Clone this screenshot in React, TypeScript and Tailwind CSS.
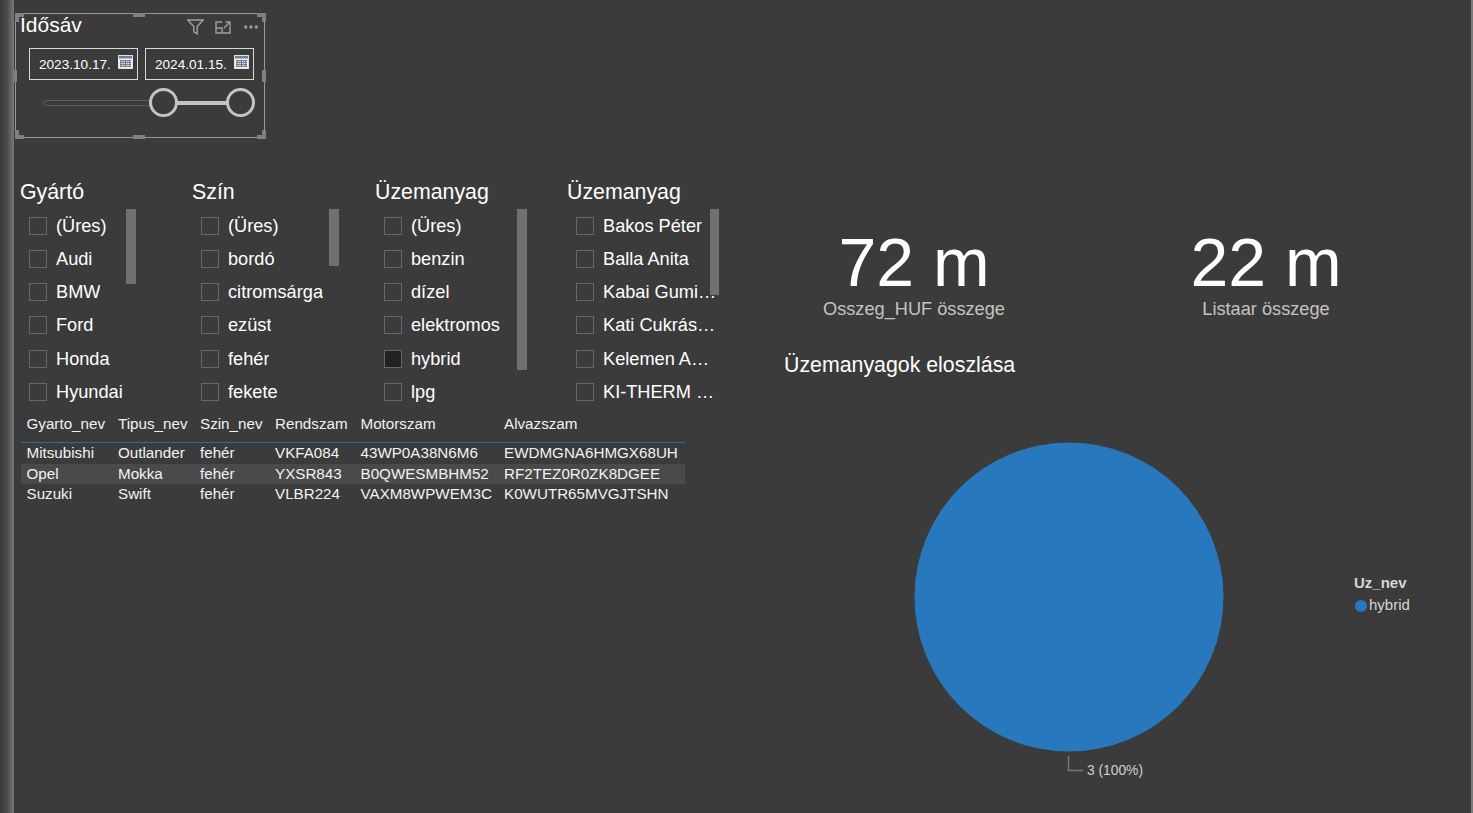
import { MoreHorizontal } from "lucide-react";

const slicers = [
  {
    title: "Gyártó",
    width: "w-[172px]",
    thumb: "h-[75px]",
    list: "w-[97px]",
    items: ["(Üres)", "Audi", "BMW", "Ford", "Honda", "Hyundai"],
  },
  {
    title: "Szín",
    width: "w-[183px]",
    thumb: "h-[57px]",
    list: "w-[128px]",
    items: ["(Üres)", "bordó", "citromsárga", "ezüst", "fehér", "fekete"],
  },
  {
    title: "Üzemanyag",
    width: "w-[192px]",
    thumb: "h-[161px]",
    list: "w-[133px]",
    items: ["(Üres)", "benzin", "dízel", "elektromos", "hybrid", "lpg"],
  },
  {
    title: "Üzemanyag",
    width: "w-[156px]",
    thumb: "h-[86px]",
    list: "w-[133.5px]",
    items: [
      "Bakos Péter",
      "Balla Anita",
      "Kabai Gumiszerviz",
      "Kati Cukrászda Kft",
      "Kelemen Autószerviz",
      "KI-THERM Szerelő Kft",
    ],
  },
];

const rows = [
  ["Mitsubishi", "Outlander", "fehér", "VKFA084", "43WP0A38N6M6", "EWDMGNA6HMGX68UH"],
  ["Opel", "Mokka", "fehér", "YXSR843", "B0QWESMBHM52", "RF2TEZ0R0ZK8DGEE"],
  ["Suzuki", "Swift", "fehér", "VLBR224", "VAXM8WPWEM3C", "K0WUTR65MVGJTSHN"],
];

const columns = ["Gyarto_nev", "Tipus_nev", "Szin_nev", "Rendszam", "Motorszam", "Alvazszam"];
const grid = "grid grid-cols-[91.5px_82px_75px_85.5px_143.5px_1fr] pl-[5.5px]";

function CalendarIcon() {
  return (
    <svg width="15" height="14" viewBox="0 0 15 14" className="shrink-0">
      <rect x="0.5" y="0.5" width="14" height="13" fill="#f4f4f4" stroke="#e2e2e2" />
      <rect x="1" y="1" width="13" height="2.5" fill="#6f7f96" />
      <path d="M2 5.5h11M2 7.5h11M2 9.5h11M2 11.5h11" stroke="#5b7fb0" strokeWidth="1" />
      <path d="M3 5v7M7.4 5v7M11.8 5v7" stroke="#4a6a9a" strokeWidth="1" />
      <path d="M5.2 5v7M9.6 5v7" stroke="#b98a5a" strokeWidth="1" />
    </svg>
  );
}

function DateBox({ value }: { value: string }) {
  return (
    <div className="w-[109px] h-[32px] border border-[#d8d8d8] flex pl-[9px] pr-[4px] pt-[6px] gap-[7px] text-[13.6px] leading-[19px] text-white">
      <span>{value}</span>
      <CalendarIcon />
    </div>
  );
}

function Handle({ className }: { className: string }) {
  return <div className={`absolute bg-[#808080] ${className}`} />;
}

function Timeline() {
  return (
    <div className="relative w-[250px] h-[125px] ml-[1px] border border-[#999999]">
      <Handle className="-left-[1px] -top-[1px] w-[9px] h-[4px]" />
      <Handle className="-left-[1px] -top-[1px] w-[4px] h-[9px]" />
      <Handle className="-right-[2px] -top-[1px] w-[9px] h-[4px]" />
      <Handle className="-right-[2px] -top-[1px] w-[4px] h-[9px]" />
      <Handle className="-left-[1px] -bottom-[2px] w-[9px] h-[4px]" />
      <Handle className="-left-[1px] -bottom-[2px] w-[4px] h-[9px]" />
      <Handle className="-right-[2px] -bottom-[2px] w-[9px] h-[4px]" />
      <Handle className="-right-[2px] -bottom-[2px] w-[4px] h-[9px]" />
      <Handle className="left-[117px] -top-[1px] w-[12px] h-[4px]" />
      <Handle className="left-[117px] -bottom-[2px] w-[12px] h-[4px]" />
      <Handle className="-left-[2px] top-[56px] w-[3px] h-[12px]" />
      <Handle className="-right-[2px] top-[56px] w-[4px] h-[12px]" />

      <div className="flex items-start justify-between pl-[4px] pr-[4px] h-[34px]">
        <span className="text-[21px] leading-[22px] text-white">Idősáv</span>
        <div className="flex items-center gap-[11px] pt-[4px] text-[#a0a0a0]">
          <svg width="17" height="16" viewBox="0 0 17 16" fill="none" stroke="currentColor" strokeWidth="1.4">
            <path d="M0.8 1h15.4l-6 6.6v7.2l-3.4-2V7.6z" />
          </svg>
          <svg width="16" height="13" viewBox="0 0 16 13" fill="none" stroke="currentColor" strokeWidth="1.4">
            <path d="M7 1H1v11h14V6M1 7h6v5M9 7l6-6M10.5 1H15v4.5" />
          </svg>
          <MoreHorizontal size={18} strokeWidth={2.4} />
        </div>
      </div>

      <div className="flex gap-[7px] pl-[13px]">
        <DateBox value="2023.10.17." />
        <DateBox value="2024.01.15." />
      </div>

      <div className="relative mt-[8px] ml-[27px] h-[30px] w-[212px]">
        <div className="absolute left-0 top-[12px] w-[108px] h-[6px] border border-[#5c5c5c] rounded-l-sm" />
        <div className="absolute left-[120px] top-[13px] w-[70px] h-[4px] bg-[#c4c4c4]" />
        <div className="absolute left-[106px] top-0 w-[29px] h-[29px] rounded-full border-[3px] border-[#c4c4c4] bg-[#3b3b3b]" />
        <div className="absolute left-[183px] top-0 w-[29px] h-[29px] rounded-full border-[3px] border-[#c4c4c4] bg-[#3b3b3b]" />
      </div>
    </div>
  );
}

function Slicer({ slicer }: { slicer: (typeof slicers)[number] }) {
  return (
    <div className={`${slicer.width} shrink-0`}>
      <div className="h-[26px] text-[21.33px] leading-[26px] text-white">{slicer.title}</div>
      <div className="flex mt-[4px] pl-[9px]">
        <div className={`${slicer.list} shrink-0`}>
          {slicer.items.map((item) => (
            <div key={item} className="flex items-center h-[33.25px] w-max">
              <div
                className={`w-[18px] h-[18px] shrink-0 border border-[#666666] ${
                  item === "hybrid" ? "bg-[#222222]" : ""
                }`}
              />
              <span className="ml-[9px] max-w-[114px] truncate text-[18.2px] leading-[24px] text-white">{item}</span>
            </div>
          ))}
        </div>
        <div className={`${slicer.thumb} w-[9.5px] bg-[#707070] shrink-0 relative`} />
      </div>
    </div>
  );
}

function VehicleTable() {
  return (
    <div className="w-[664px] ml-[7px] text-[15.2px] text-[#f2f2f2]">
      <div className={`${grid} h-[34.8px] items-center pb-[3px] border-b border-[#2a6ea8]`}>
        {columns.map((c) => (
          <span key={c}>{c}</span>
        ))}
      </div>
      {rows.map((row, i) => (
        <div
          key={row[0]}
          className={`${grid} h-[20.5px] items-center pb-[1px] leading-[18px] ${i === 1 ? "bg-[#4a4a4a]" : ""}`}
        >
          {row.map((cell, j) => (
            <span key={j} className="whitespace-nowrap">
              {cell}
            </span>
          ))}
        </div>
      ))}
    </div>
  );
}

function Kpi({ value, label }: { value: string; label: string }) {
  return (
    <div className="w-[352px] flex flex-col items-center">
      <div className="text-[68px] leading-[71px] text-white">{value}</div>
      <div className="text-[18.2px] leading-[22px] text-[#c4c4c4]">{label}</div>
    </div>
  );
}

export default function App() {
  return (
    <div className="flex h-[813px] overflow-hidden bg-[#3b3b3b] font-['Liberation_Sans',Arial,sans-serif]">
      <div className="w-[14px] shrink-0 bg-gradient-to-r from-[#3b3b3b] via-[#4a4a4a] to-[#7a7a7a]" />

      <div className="w-[711px] shrink-0 pt-[13px]">
        <Timeline />
        <div className="flex mt-[41px] pl-[6px]">
          {slicers.map((s, i) => (
            <Slicer key={i} slicer={s} />
          ))}
        </div>
        <VehicleTable />
      </div>

      <div className="flex-1 pt-[227px]">
        <div className="flex ml-[13px]">
          <Kpi value="72 m" label="Osszeg_HUF összege" />
          <Kpi value="22 m" label="Listaar összege" />
        </div>
        <div className="ml-[59px] mt-[32px] text-[21.33px] leading-[26px] text-white">Üzemanyagok eloszlása</div>

        <div className="flex mt-[64px] pl-[189px]">
          <div className="w-[310px]">
            <svg width="310" height="310" viewBox="0 0 310 310" className="block">
              <circle cx="155" cy="155" r="154.5" fill="#2878bd" />
            </svg>
            <div className="flex items-end ml-[153px] mt-[3px]">
              <svg width="18" height="17" viewBox="0 0 18 17" fill="none" stroke="#777777" strokeWidth="1.4" className="shrink-0">
                <path d="M1.5 1v14.5H16" />
              </svg>
              <span className="ml-[2px] -mb-[8px] text-[13.8px] leading-[18px] text-[#d0d0d0] whitespace-nowrap">3 (100%)</span>
            </div>
          </div>
          <div className="ml-[130px] pt-[131px] text-[15px] text-[#d6d6d6]">
            <div className="font-bold leading-[20px]">Uz_nev</div>
            <div className="flex items-center mt-[2px] ml-[1px] leading-[20px]">
              <span className="w-[12px] h-[12px] rounded-full bg-[#2878bd] mt-[1px]" />
              <span className="ml-[2px]">hybrid</span>
            </div>
          </div>
        </div>
      </div>

      <div className="w-[2px] shrink-0 bg-[#7a7a7a]" />
    </div>
  );
}
